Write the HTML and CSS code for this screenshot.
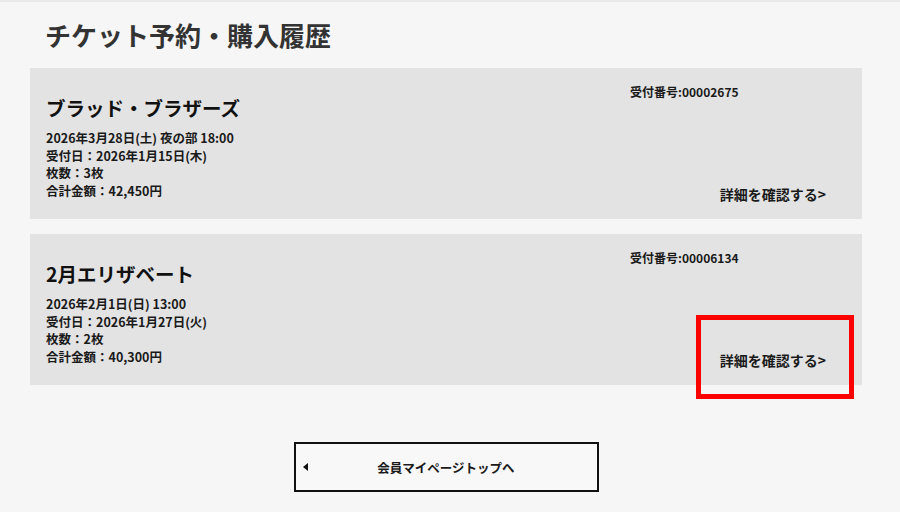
FILE: index.html
```html
<!DOCTYPE html>
<html lang="ja">
<head>
<meta charset="utf-8">
<title>チケット予約・購入履歴</title>
<link rel="stylesheet" href="styles.css">
</head>
<body>
<div class="page">
  <h1 class="page-title">チケット予約・購入履歴</h1>

  <div class="order-card">
    <div class="order-main">
      <h2 class="order-title">ブラッド・ブラザーズ</h2>
      <ul class="order-details">
        <li>2026年3月28日(土) 夜の部 18:00</li>
        <li>受付日：2026年1月15日(木)</li>
        <li>枚数：3枚</li>
        <li>合計金額：42,450円</li>
      </ul>
    </div>
    <div class="order-side">
      <p class="order-number">受付番号:00002675</p>
      <a class="order-link" href="#">詳細を確認する&gt;</a>
    </div>
  </div>

  <div class="order-card">
    <div class="order-main">
      <h2 class="order-title">2月エリザベート</h2>
      <ul class="order-details">
        <li>2026年2月1日(日) 13:00</li>
        <li>受付日：2026年1月27日(火)</li>
        <li>枚数：2枚</li>
        <li>合計金額：40,300円</li>
      </ul>
    </div>
    <div class="order-side">
      <p class="order-number">受付番号:00006134</p>
      <a class="order-link" href="#">詳細を確認する&gt;</a>
    </div>
    <div class="highlight-box"></div>
  </div>

  <div class="back-wrap">
    <a class="back-button" href="#"><span class="back-arrow"></span>会員マイページトップへ</a>
  </div>
</div>
</body>
</html>
```

FILE: styles.css
```css
* { box-sizing: border-box; }

html, body {
  margin: 0;
  padding: 0;
}

body {
  background: #f6f6f6;
  border-top: 2px solid #e9e9e9;
  font-family: "Noto Sans CJK JP", "Noto Sans", sans-serif;
  color: #1a1a1a;
  height: 512px;
  overflow: hidden;
}

.page {
  width: 832px;
  margin-left: 30px;
}

.page-title {
  margin: 16px 0 16px;
  padding-left: 15px;
  font-size: 26px;
  line-height: 34px;
  font-weight: 700;
  color: #333;
}

.order-card {
  position: relative;
  display: flex;
  justify-content: space-between;
  background: #e3e3e3;
  height: 151px;
  padding: 16px 36px 16px 16px;
  margin-bottom: 15px;
}

.order-main {
  padding-bottom: 4px;
}

.order-title {
  margin: 10px 0 7px;
  font-size: 19.5px;
  line-height: 28px;
  font-weight: 700;
  color: #111;
}

.order-details {
  list-style: none;
  margin: 0;
  padding: 0;
  font-size: 12.5px;
  line-height: 17.5px;
  font-weight: 700;
}

.order-side {
  width: 196px;
  display: flex;
  flex-direction: column;
  justify-content: space-between;
}

.order-number {
  margin: 0;
  font-size: 12px;
  line-height: 16px;
  font-weight: 700;
}

.order-link {
  align-self: flex-end;
  font-size: 14px;
  line-height: 18px;
  font-weight: 700;
  color: #1a1a1a;
  text-decoration: none;
}

.highlight-box {
  position: absolute;
  left: 666px;
  top: 81px;
  width: 158px;
  height: 84px;
  border: 5px solid #ff0000;
}

.back-wrap {
  display: flex;
  justify-content: center;
  padding-top: 42px;
}

.back-button {
  position: relative;
  display: flex;
  align-items: center;
  justify-content: center;
  width: 305px;
  height: 50px;
  border: 2px solid #111;
  background: #f8f8f8;
  font-size: 12.5px;
  font-weight: 700;
  color: #1a1a1a;
  text-decoration: none;
}

.back-arrow {
  position: absolute;
  left: 7px;
  top: 50%;
  margin-top: -4px;
  width: 0;
  height: 0;
  border-top: 4px solid transparent;
  border-bottom: 4px solid transparent;
  border-right: 5px solid #111;
}
```
